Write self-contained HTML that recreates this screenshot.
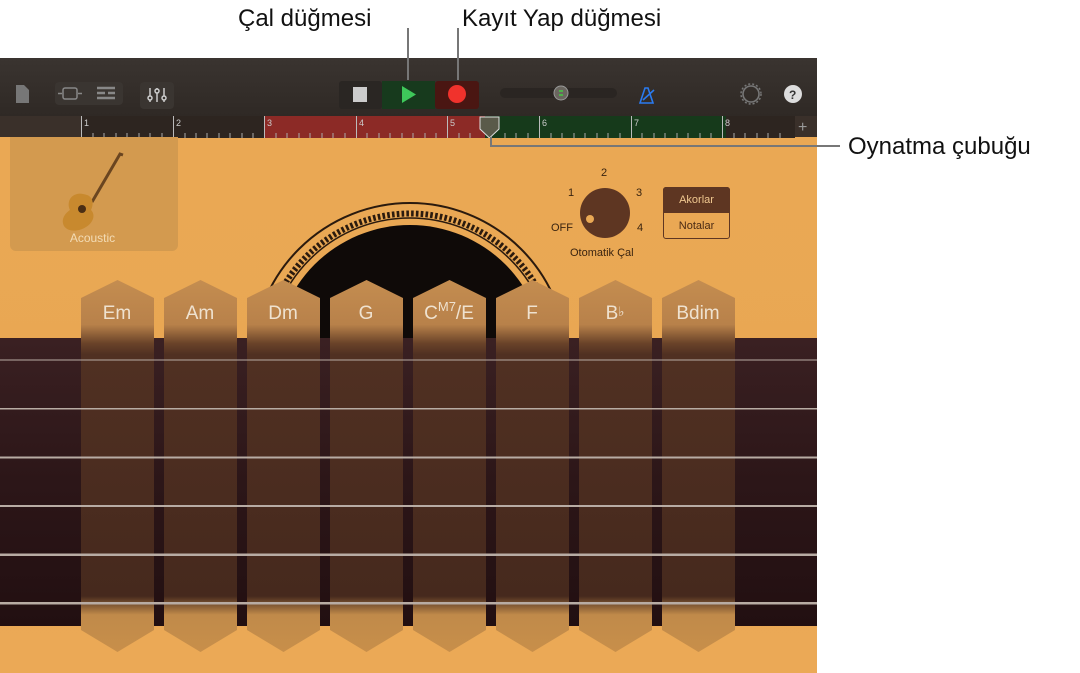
<!DOCTYPE html>
<html><head><meta charset="utf-8"><style>
*{margin:0;padding:0;box-sizing:border-box}
body{width:1080px;height:673px;background:#fff;position:relative;overflow:hidden;font-family:"Liberation Sans",sans-serif}
.a{position:absolute}
.call{position:absolute;font-size:24px;color:#111;white-space:nowrap}
.lbl{font-size:11px;color:#3a2410;position:absolute}
</style></head><body>
<div class="call" style="left:238px;top:5px">Çal düğmesi</div>
<div class="call" style="left:462px;top:5px">Kayıt Yap düğmesi</div>
<div class="call" style="left:848px;top:133px">Oynatma çubuğu</div>

<div class="a" style="left:0;top:58px;width:817px;height:615px;background:linear-gradient(180deg,#eaa955,#e9a753 50%,#eba956);"></div>
<div class="a" style="left:0;top:58px;width:817px;height:58px;background:linear-gradient(#3a3430,#2f2925)"></div>
<div class="a" style="left:0;top:116px;width:817px;height:21px;background:#3a302a"></div>
<svg class="a" style="left:0;top:116px" width="817" height="22">
<rect x="81" y="0" width="714" height="22" fill="#2d2520"/>
<rect x="264" y="0" width="221" height="22" fill="#8c2a26"/>
<rect x="485" y="0" width="241" height="22" fill="#163a1b"/>
<g stroke="#bbb" stroke-width="1">
<line x1="81.5" y1="0" x2="81.5" y2="22"/><line x1="173.5" y1="0" x2="173.5" y2="22"/><line x1="264.5" y1="0" x2="264.5" y2="22"/><line x1="356.5" y1="0" x2="356.5" y2="22"/><line x1="447.5" y1="0" x2="447.5" y2="22"/><line x1="539.5" y1="0" x2="539.5" y2="22"/><line x1="631.5" y1="0" x2="631.5" y2="22"/><line x1="722.5" y1="0" x2="722.5" y2="22"/>
</g>
<g stroke="#aaa" stroke-width="1">
<path d="M93 17v5M104 17v5M116 17v5M127 17v5M139 17v5M150 17v5M162 17v5M185 17v5M196 17v5M207 17v5M219 17v5M230 17v5M242 17v5M253 17v5M276 17v5M287 17v5M299 17v5M310 17v5M322 17v5M333 17v5M345 17v5M367 17v5M379 17v5M390 17v5M402 17v5M413 17v5M425 17v5M436 17v5M459 17v5M470 17v5M505 17v5M516 17v5M528 17v5M551 17v5M562 17v5M574 17v5M585 17v5M597 17v5M608 17v5M620 17v5M642 17v5M654 17v5M665 17v5M677 17v5M688 17v5M700 17v5M711 17v5M734 17v5M745 17v5M757 17v5M768 17v5M780 17v5"/>
</g>
<g fill="#ccc" font-size="9" font-family="Liberation Sans">
<text x="84" y="10">1</text><text x="176" y="10">2</text><text x="267" y="10">3</text><text x="359" y="10">4</text><text x="450" y="10">5</text><text x="542" y="10">6</text><text x="634" y="10">7</text><text x="725" y="10">8</text></g>
<text x="798" y="16" fill="#999" font-size="16">+</text>
<path d="M480 1h19v12l-9.5 9l-9.5-9z" fill="#5a5a4a" stroke="#ddd" stroke-width="1"/>
</svg>
<div class="a" style="left:407px;top:28px;width:2px;height:52px;background:#777"></div>
<div class="a" style="left:457px;top:28px;width:2px;height:52px;background:#777"></div>
<div class="a" style="left:490px;top:137px;width:2px;height:10px;background:#777"></div>
<div class="a" style="left:490px;top:145px;width:350px;height:2px;background:#777"></div>

<svg class="a" style="left:0;top:58px" width="817" height="58">
<path d="M16 27h8l5 5v13h-13z" fill="#777"/>
<rect x="55" y="24" width="68" height="23" rx="4" fill="#3a3531"/>
<rect x="63" y="30" width="14" height="11" rx="2" fill="none" stroke="#888" stroke-width="1.5"/>
<path d="M58 35.5h4M78 35.5h4" stroke="#888" stroke-width="1.5"/>
<path d="M97 30h18M97 35h8M108 35h7M97 40h18" stroke="#888" stroke-width="2.5"/>
<rect x="140" y="24" width="34" height="27" rx="4" fill="#3a3531"/>
<path d="M150 30v14M157 30v14M164 30v14" stroke="#ccc" stroke-width="1.5"/>
<circle cx="150" cy="40" r="2" fill="#3a3531" stroke="#ccc" stroke-width="1.5"/><circle cx="157" cy="33" r="2" fill="#3a3531" stroke="#ccc" stroke-width="1.5"/><circle cx="164" cy="40" r="2" fill="#3a3531" stroke="#ccc" stroke-width="1.5"/>
<rect x="339" y="23" width="43" height="28" rx="3" fill="#2a2623"/>
<rect x="353" y="29" width="14" height="15" fill="#ccc"/>
<rect x="382" y="23" width="53" height="28" fill="#173a1d"/>
<path d="M402 28l14 8.5l-14 8.5z" fill="#3ec85a"/>
<rect x="435" y="23" width="44" height="28" rx="3" fill="#4a1612"/>
<circle cx="457" cy="36" r="9" fill="#f0322c"/>
<rect x="500" y="30" width="117" height="10" rx="5" fill="#2a2522"/>
<circle cx="561" cy="35" r="7" fill="#6a665f" stroke="#999"/>
<path d="M559 33h4M559 37h4" stroke="#4c4" stroke-width="1.5"/>
<path d="M640 45l5-15h3l5 15zM643 42l11-10" fill="none" stroke="#2a7bf0" stroke-width="1.6"/>
<circle cx="751" cy="36" r="8" fill="none" stroke="#777" stroke-width="1.6"/>
<circle cx="751" cy="36" r="10" fill="none" stroke="#777" stroke-width="1.5" stroke-dasharray="2 2"/>
<circle cx="793" cy="36" r="9" fill="#ddd"/>
<text x="789" y="41" font-size="12" font-weight="bold" fill="#333">?</text>
</svg>

<div class="a" style="left:10px;top:137px;width:168px;height:114px;background:#d39a4f;border-radius:0 0 6px 6px"></div>
<svg class="a" style="left:55px;top:152px" width="75" height="80">
<path d="M68 3l-3 -1l-28 48" stroke="#6a4520" stroke-width="3" fill="none"/>
<path d="M22 42c-8 2-10 10-7 16c-6 4-9 10-6 16c4 6 14 6 22 1c7-4 10-12 5-17c3-6 2-13-4-15c-3-1-7-2-10-1z" fill="#c8892e"/>
<circle cx="27" cy="57" r="4" fill="#4a2e14"/>
</svg>
<div class="a" style="left:10px;top:231px;width:165px;text-align:center;font-size:12px;color:#f3dcb6">Acoustic</div>

<svg class="a" style="left:240px;top:195px" width="340" height="150">
<circle cx="170" cy="165" r="157" fill="none" stroke="#2a1a0e" stroke-width="2"/>
<circle cx="170" cy="165" r="146.5" fill="none" stroke="#2a1a0e" stroke-width="6" stroke-dasharray="2.6 2.2"/>
<circle cx="170" cy="165" r="142" fill="none" stroke="#2a1a0e" stroke-width="1.5"/>
<circle cx="170" cy="165" r="135" fill="#0f0a08"/>
</svg>

<div class="a" style="left:0;top:338px;width:817px;height:288px;background:linear-gradient(#3a2022,#2c1618 50%,#220f11)"></div>

<svg class="a" style="left:0;top:270px" width="817" height="400">
<defs>
<linearGradient id="cg" x1="0" y1="0" x2="0" y2="1">
<stop offset="0" stop-color="#c48d50"/><stop offset="0.12" stop-color="#b8814a"/><stop offset="0.17" stop-color="#6a4329"/><stop offset="0.2" stop-color="#503022"/><stop offset="0.85" stop-color="#46291d"/><stop offset="0.9" stop-color="#c08a4a"/><stop offset="1" stop-color="#c88f4a"/>
</linearGradient>
</defs>
<g fill="url(#cg)">
<path id="c" d="M81 28l36.5-18l36.5 18v332l-36.5 22l-36.5-22z"/>
<use href="#c" x="83"/><use href="#c" x="166"/><use href="#c" x="249"/><use href="#c" x="332"/><use href="#c" x="415"/><use href="#c" x="498"/><use href="#c" x="581"/>
</g>
<g fill="#b8aca4">
<rect x="0" y="89.5" width="817" height="1"/>
<rect x="0" y="138" width="817" height="1.5"/>
<rect x="0" y="186.5" width="817" height="2"/>
<rect x="0" y="235" width="817" height="2"/>
<rect x="0" y="283.5" width="817" height="2.5"/>
<rect x="0" y="332" width="817" height="2.5"/>
</g>
<g fill="#efe2d0" font-size="19" text-anchor="middle" font-family="Liberation Sans">
<text x="117" y="49">Em</text><text x="200" y="49">Am</text><text x="283" y="49">Dm</text><text x="366" y="49">G</text>
<text x="449" y="49">C<tspan font-size="13" dy="-8">M7</tspan><tspan dy="8">/E</tspan></text>
<text x="532" y="49">F</text><text x="615" y="49">B<tspan font-size="13" dy="-3">♭</tspan></text><text x="698" y="49">Bdim</text>
</g>
</svg>

<div class="a" style="left:580px;top:188px;width:50px;height:50px;border-radius:50%;background:#5e3622"></div>
<div class="a" style="left:586px;top:215px;width:8px;height:8px;border-radius:50%;background:#eaa955"></div>
<div class="lbl" style="left:601px;top:167px">2</div>
<div class="lbl" style="left:568px;top:187px">1</div>
<div class="lbl" style="left:636px;top:187px">3</div>
<div class="lbl" style="left:551px;top:222px">OFF</div>
<div class="lbl" style="left:637px;top:222px">4</div>
<div class="lbl" style="left:570px;top:247px">Otomatik Çal</div>
<div class="a" style="left:663px;top:187px;width:67px;height:52px;border:1.5px solid #5e3622;border-radius:3px"></div>
<div class="a" style="left:663px;top:187px;width:67px;height:26px;background:#5e3622;border-radius:3px 3px 0 0;color:#f0c890;font-size:11px;text-align:center;line-height:26px">Akorlar</div>
<div class="a" style="left:663px;top:213px;width:67px;height:26px;color:#4a2a14;font-size:11px;text-align:center;line-height:26px">Notalar</div>
</body></html>
